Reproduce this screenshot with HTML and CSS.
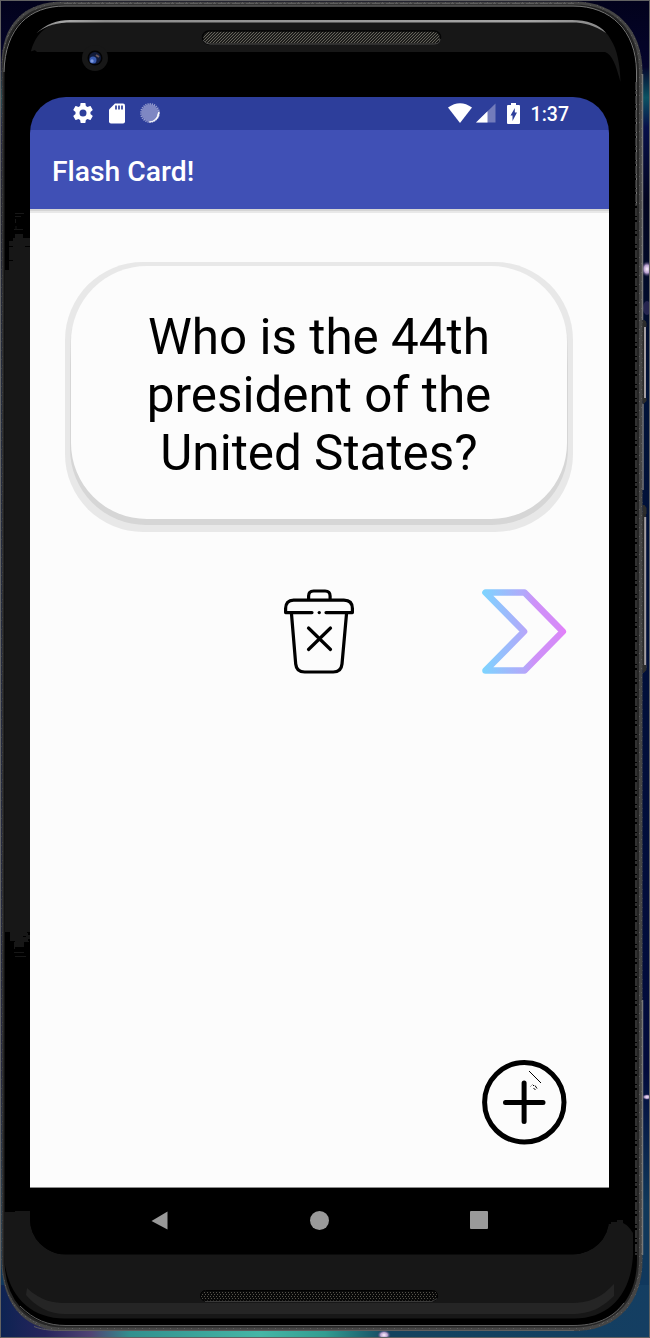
FILE: index.html
```html
<!DOCTYPE html>
<html lang="en">
<head>
<meta charset="utf-8">
<title>Flash Card!</title>
<link rel="stylesheet" href="styles.css">
</head>
<body>
<div class="desktop">
  <svg class="device" width="650" height="1338" viewBox="0 0 650 1338" aria-hidden="true">
    <defs>
      <linearGradient id="sky" x1="0" y1="0" x2="0" y2="1"><stop offset="0" stop-color="#02021c"/><stop offset=".05" stop-color="#05052c"/><stop offset=".073" stop-color="#0b5363"/><stop offset=".095" stop-color="#07104a"/><stop offset=".15" stop-color="#02051f"/><stop offset=".3" stop-color="#001238"/><stop offset=".8" stop-color="#020b3c"/><stop offset=".9" stop-color="#10385a"/><stop offset="1" stop-color="#10385f"/></linearGradient>
      <linearGradient id="nebula"><stop offset="0" stop-color="#0c2352"/><stop offset=".07" stop-color="#27245c"/><stop offset=".14" stop-color="#514474"/><stop offset=".2" stop-color="#32908e"/><stop offset=".4" stop-color="#45b6a6"/><stop offset=".5" stop-color="#329d91"/><stop offset=".6" stop-color="#13435f"/><stop offset="1" stop-color="#143e62"/></linearGradient>
      <radialGradient id="star"><stop offset="0" stop-color="#fff4ff"/><stop offset=".5" stop-color="#b9a0cf"/><stop offset="1" stop-color="#35305e" stop-opacity="0"/></radialGradient>
      <linearGradient id="shine"><stop offset="0" stop-color="#777" /><stop offset=".05" stop-color="#aaa"/><stop offset=".12" stop-color="#8b8b8b"/><stop offset=".86" stop-color="#a5a5a5"/><stop offset="1" stop-color="#888"/></linearGradient>
      <pattern id="mesh" width="3" height="3" patternUnits="userSpaceOnUse"><rect width="3" height="3" fill="#1c1c1a"/><path d="M0 .5h1M2 1.5h1M1 2.5h1" stroke="#66645c"/></pattern>
      <pattern id="mesh-dark" width="3" height="4" patternUnits="userSpaceOnUse"><rect width="3" height="4" fill="#090909"/><path d="M0 .5h1M1 2.5h1" stroke="#55524a"/></pattern>
      <pattern id="grain" width="7" height="9" patternUnits="userSpaceOnUse"><path d="M0 .5h1M4 2.5h1M2 5.5h1M5 7.5h1M1 8.5h1" stroke="#777" opacity=".45"/></pattern>
    </defs>
    <rect width="650" height="1338" fill="url(#sky)"/>
    <rect y="1285" width="650" height="53" fill="url(#nebula)"/>
    <ellipse cx="647" cy="269" rx="6" ry="8" fill="url(#star)"/>
    <ellipse cx="647" cy="308" rx="4" ry="7" fill="#35305e" opacity=".7"/>
    <ellipse cx="647" cy="1097" rx="5" ry="3" fill="url(#star)"/>
    <ellipse cx="384" cy="1335" rx="7" ry="5" fill="url(#star)"/>
    <path d="M644 321v80M644 513v157" stroke="#292929" stroke-width="4"/>
    <path d="M645 324v75M645.2 517v151" stroke="#a49ea2" stroke-width="2"/>
    <path d="M642.500 320h2l2 3v4h-4zM642.500 398h4v3l-3 3h-1zM642.500 505h2l2 3v6h-4zM642.500 665h4v5l-3 3h-1z" fill="#2d2d2c"/>

    <path d="M1.500 65C1.500 24 24 1.500 64 1.500H574C615 1.500 642.500 29 642.500 72V1260C642.500 1304 616 1331 574 1331H65C24 1331 1.500 1304 1.500 1260Z" fill="#454545"/>
    <path d="M1.500 65C1.500 24 24 1.500 64 1.500H574C615 1.500 642.500 29 642.500 72V1260C642.500 1304 616 1331 574 1331H65C24 1331 1.500 1304 1.500 1260Z" fill="url(#grain)"/>
    <path d="M642.500 74V320M643 404V490M642.500 1000V1255" stroke="#777" stroke-width="1.500"/>
    <path d="M3.500 66C5 26 27 5.500 64 5.500H574C614 5.500 638 31 638 72V1259C638 1302 612 1326.500 574 1326.500H65C27 1326.500 3.500 1301 3.500 1259Z" fill="#000" stroke="#252525" stroke-width="2"/>
    <path d="M4 72C5 28 29 6 65 6H573C611 6 636 31 636.500 71V205" fill="none" stroke="#777" stroke-width="1"/>
    <path d="M636 82V1255" fill="none" stroke="#414141" stroke-width="1.500" stroke-dasharray="8 1 3 2"/>
    <path d="M64 3.500H574" stroke="#696969" stroke-dasharray="8 1 3 2" opacity=".7"/>

    <path d="M31 51C37 29 53 21 72 21H572C591 21 605 27 611 40C617 49 620 64 620.500 82C616 65 612 54 605 52H37C34 48 33 52 31 51Z" fill="#171717"/>
    <path d="M36 33.500C46 24 57 20 70 20H572C587 20 599 24 606 33C594 25 584 22.500 572 22.500H72C57 22.500 47 25 36 33.500Z" fill="url(#shine)"/>
    <rect x="202.500" y="31" width="238" height="13" rx="6.500" fill="url(#mesh)" stroke="#050505" stroke-width="1.500"/>
    <path d="M203 40q2 4 7 4H434q6 0 6-5" fill="none" stroke="#555"/>
    <circle cx="95" cy="58" r="13" fill="#171717"/><circle cx="95" cy="58" r="7.500" fill="#030303"/><circle cx="95" cy="58" r="6" fill="#111a38"/><circle cx="93" cy="60" r="3.500" fill="#395bb1"/><circle cx="92" cy="61" r="1.700" fill="#7d99e0"/><path d="M96 55l3 2" stroke="#695759" stroke-width="2"/>

    <path d="M9 246v-5h4v-3h2v-4h8v4h7V932h-2v3h2v4h-2v2h-4v6H14v-5h-4v-10H5V270h4v-12z" fill="#171717"/>
    <path d="M15 213.500h9M15 216.500h6M15.500 219v4M14 229.500h9M16 226v4M19 941.500h10M14.500 944v5M14 952.500h10M15 956.500h11" stroke="#171717"/>
    <path d="M9 246.500h4M25 246.500h5M7 260.500h6M7 933.500h3M27 932.500h3M23 936.500h3M7 941.500h8" stroke="#000"/>

    <path d="M4 1212h11v-1h15C30 1237 45 1254.500 65 1254.500H573C591 1254.500 602 1239 608 1224h3v-2h6v-2h6v3c5 2 8 7 10 10v22C631 1294 610 1318.500 574 1318.500H65C28 1318.500 6 1293 4 1255Z" fill="#171717"/>
    <path d="M27 1288C41 1301 53 1303 67 1303H571C589 1303 601 1298 614 1284v12C602 1307 592 1314 571 1314H65C50 1314 36 1307 26 1295Z" fill="#252525"/>
    <path d="M20 1306C34 1320 48 1325.500 66 1325.500H573C595 1325.500 612 1319 624 1303M34 1326.500C44 1330.500 54 1330.500 66 1330.500H574" fill="none" stroke="#5e5e5e"/>
    <rect x="200.500" y="1290.500" width="237" height="10.500" rx="5" fill="url(#mesh-dark)" stroke="#000"/>
    <path d="M205 1301.500H432l5-3" fill="none" stroke="#3a3a3a"/>
    <path d="M0 .5H650M.5 0V1338M0 1337.500H650M649.500 0V1338" stroke="#626262"/>
  </svg>

  <main class="screen">
    <header class="status">
      <div class="status-group status-left">
        <svg width="20" height="20" viewBox="2 2 20 20"><path fill="#fff" fill-rule="evenodd" d="M19.430 12.980c.04-.32.07-.64.07-.98s-.03-.66-.07-.98l2.110-1.650c.19-.15.24-.42.12-.64l-2-3.460c-.12-.22-.39-.3-.61-.22l-2.490 1c-.52-.4-1.080-.73-1.690-.98l-.38-2.650C14.460 2.180 14.250 2 14 2h-4c-.25 0-.46.18-.49.42l-.38 2.650c-.61.25-1.170.59-1.690.98l-2.490-1c-.23-.09-.49 0-.61.22l-2 3.460c-.13.22-.07.49.12.64l2.110 1.650c-.04.32-.07.65-.07.98s.03.66.07.98l-2.110 1.650c-.19.15-.24.42-.12.64l2 3.460c.12.22.39.3.61.22l2.490-1c.52.4 1.080.73 1.690.98l.38 2.650c.03.24.24.42.49.42h4c.25 0 .46-.18.49-.42l.38-2.650c.61-.25 1.170-.59 1.690-.98l2.490 1c.23.09.49 0 .61-.22l2-3.460c.12-.22.07-.49-.12-.64zM12 15.500A3.500 3.500 0 1 1 12 8.500a3.500 3.500 0 0 1 0 7z"/></svg>
        <svg width="16" height="21" viewBox="0 0 16 21"><path d="M6 .5h8q2 0 2 2v16q0 2-2 2H2q-2 0-2-2v-12z" fill="#fff"/><path d="M7 2.500v4M10 2.500v4M13 2.500v4" stroke="#2d3e9b" stroke-width="1.700"/></svg>
        <svg width="20" height="20" viewBox="0 0 20 20"><circle cx="10" cy="10" r="8.500" fill="#7e87c3"/><circle cx="10" cy="10" r="9" fill="none" stroke="#9ba2d1" stroke-width="1.800" stroke-dasharray="1.200 1"/><path d="M19 8.500a9 9 0 0 1-10 10.500 9.500 9.500 0 0 0 9-8.500z" fill="#fff" stroke="#fff" stroke-width=".6"/><circle cx="9.500" cy="9.500" r="7.800" fill="#7e87c3"/></svg>
      </div>
      <div class="status-group status-right">
        <svg class="wifi" width="24" height="20" viewBox="0 0 24 20"><path d="M0 4.500Q12-4 24 4.500L12 20z" fill="#fff"/></svg>
        <svg class="signal" width="20" height="20" viewBox="0 0 20 20"><path d="M19.500.5v19H0z" fill="#737cbb"/><path d="M11.500 8.300v11.200H0z" fill="#fff"/></svg>
        <svg class="battery" width="13" height="21" viewBox="0 0 13 21"><path d="M4 0h5v2h3q1 0 1 1v17q0 1-1 1H1q-1 0-1-1V3q0-1 1-1h3z" fill="#fff"/><path d="M7.800 5v4.500H10L5.500 18v-5.500H3.500z" fill="#2d3e9b"/></svg>
        <span class="clock">1:37</span>
      </div>
    </header>
    <div class="toolbar"><h1 class="title">Flash Card!</h1></div>
    <section class="content">
      <div class="card-shadow"><div class="card-depth"><p class="card">Who is the 44th<br>president of the<br>United States?</p></div></div>
      <div class="actions">
        <svg class="trash" width="70" height="85" viewBox="0 0 70 85" fill="none" stroke="#000" stroke-width="3.200" stroke-linecap="round" stroke-linejoin="round"><path d="M24.600 10V7q0-5 5-5h11.500q5 0 5 5v3M28 23.600H1.600v-4q0-8.500 8-8.500h50.300q8.500 0 8.500 8.500v4H42M7.500 25l4.200 50q.8 8 9 8h28.500q8 0 8.800-8L62.500 25M24.500 39l22 21.500M46.500 39l-22 21.500"/><path d="M35.200 23.600h.1"/></svg>
        <svg class="next" width="85" height="85" viewBox="0 0 85 85"><defs><linearGradient id="arrow" gradientUnits="userSpaceOnUse" x1="0" y1="0" x2="85" y2="0"><stop offset="0" stop-color="#7cd5ff"/><stop offset=".5" stop-color="#b3a8fa"/><stop offset=".62" stop-color="#ce91f8"/><stop offset=".88" stop-color="#d58bf8"/><stop offset="1" stop-color="#e77dfa"/></linearGradient></defs><path d="M3.500 3.500H42.500L80.800 42.500 42.500 81.500H3.500L42 42.500z" fill="none" stroke="url(#arrow)" stroke-width="6.600" stroke-linejoin="round"/></svg>
      </div>
      <div class="add-row">
        <svg width="85" height="85" viewBox="0 0 85 85" fill="none" stroke="#000"><circle cx="42.300" cy="42.300" r="39.700" stroke-width="5"/><path d="M42.100 23v38.500M23.500 42.500h37.500" stroke-width="5" stroke-linecap="round"/><path d="M47 11l12 12M51 25l1 1m-.5 2l2 2m-.5-4.500l2 3" stroke-width="1"/><path d="M48 27l3-3" stroke="#aaa" stroke-width="1"/></svg>
      </div>
    </section>
    <nav class="nav">
      <svg width="17" height="19" viewBox="0 0 17 19"><path d="M16.500.5v18L.5 10z" fill="#999"/></svg>
      <svg width="19" height="19" viewBox="0 0 19 19"><circle cx="9.500" cy="9.500" r="9.500" fill="#999"/></svg>
      <svg width="18" height="18" viewBox="0 0 18 18"><rect width="18" height="18" rx="1" fill="#999"/></svg>
    </nav>
  </main>
</div>
</body>
</html>
```
FILE: styles.css
```css
* { box-sizing: border-box; }
body { margin: 0; font-family: Roboto, "Liberation Sans", sans-serif; }
svg { display: block; flex-shrink: 0; }
.desktop { display: grid; width: 650px; height: 1338px; overflow: hidden; }
.device, .screen { grid-area: 1 / 1; }
.screen { display: flex; flex-direction: column; width: 579px; height: 1157px; margin: 97px 0 0 30px; overflow: hidden; border-radius: 36px 36px 35px 35px; background: #000; }
.status { display: flex; justify-content: space-between; align-items: flex-start; height: 33px; padding: 6px 40px 0 43px; background: #2d3e9b; }
.status-group { display: flex; }
.status-left { gap: 16px; }
.status-left svg:last-child { margin-left: -1px; }
.signal { margin-left: 4px; }
.battery { margin-left: 11px; }
.clock { margin: 0 0 0 11px; color: #fff; font-size: 19.5px; font-weight: 500; line-height: 23px; }
.toolbar { display: flex; align-items: center; height: 79px; padding: 5px 22px 0; background: #4050b5; }
.title { margin: 0; color: #fff; font-size: 28.3px; font-weight: 500; line-height: 34px; white-space: nowrap; }
.content { display: flex; flex: 1; flex-direction: column; padding: 53px 36px 42px 35px; background: #fcfcfc; border-bottom: 1px solid #8d8d8d; box-shadow: inset 0 2px #d5d5d5, inset 0 4px #e8e8e8; }
.card-shadow { height: 270px; padding: 4px 5px 7px; border-radius: 78px; background: #e8e8e8; }
.card-depth { height: 259px; padding: 0 1px 6px; border-radius: 76px; background: linear-gradient(#e8e8e8 60px, #d6d6d6 100px); }
.card { display: flex; align-items: center; justify-content: center; height: 253px; margin: 0; padding-top: 5px; border-radius: 76px; background: #fcfcfc; color: #000; font-size: 49.4px; line-height: 58px; text-align: center; white-space: nowrap; }
.actions { display: grid; grid-template-columns: 1fr 70px 1fr; align-items: center; margin-top: 57px; }
.trash { grid-column: 2; }
.next { grid-column: 3; justify-self: end; margin-right: 6px; }
.add-row { display: flex; justify-content: flex-end; margin-top: auto; padding-right: 6px; }
.nav { display: grid; grid-template-columns: repeat(3, 160px); justify-content: center; justify-items: center; align-items: center; height: 66px; padding: 0 1px 2px 0; background: #000; }
```
